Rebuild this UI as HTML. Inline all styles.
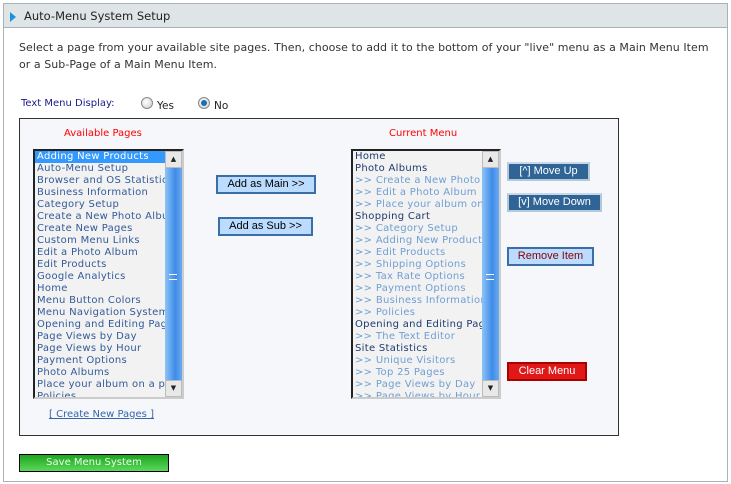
<!DOCTYPE html>
<html><head><meta charset="utf-8"><style>
*{margin:0;padding:0;box-sizing:border-box}
body{width:731px;height:484px;background:#fff;font-family:"DejaVu Sans","Liberation Sans",sans-serif;position:relative;overflow:hidden}
.abs{position:absolute}
.outer{left:3px;top:3px;width:725px;height:479px;border:1px solid #a9b2b7}
.hdr{left:4px;top:4px;width:723px;height:24px;background:#dfe5e6;border-bottom:1px solid #a9b2b7}
.hdr span{position:absolute;left:20px;top:5px;font-size:11.5px;color:#222}
.tri{left:10px;top:12px;width:0;height:0;border-top:5px solid transparent;border-bottom:5px solid transparent;border-left:6px solid #1f8fe0}
.intro{left:19px;top:39px;font-size:11px;color:#333;line-height:17px;width:692px;letter-spacing:0.05px}
.tmd{left:21px;top:98px;font-size:10px;color:#1a1a8c}
.radio{width:12px;height:12px;border-radius:50%;border:1px solid #888;background:radial-gradient(circle at 40% 40%,#fff,#ccc)}
.radio.on::after{content:"";position:absolute;left:2px;top:2px;width:6px;height:6px;border-radius:50%;background:#1a6fb0}
.lbl{font-size:10.5px;color:#222}
.box{left:19px;top:118px;width:600px;height:318px;background:#f6f7fb;border:1px solid #333}
.red{font-size:10px;color:#f00}
.list{width:151px;height:250px;border:2px solid #222;border-right-color:#ccc;border-bottom-color:#ccc;background:#f2f2f2;overflow:hidden}
.list .it{font-size:10px;line-height:12px;height:12px;padding-left:2px;color:#335a99;white-space:nowrap;letter-spacing:0.3px;width:131px;overflow:hidden}
.list .sel{background:#3399ff;color:#fff}
.list .m{color:#1e3a6e}
.list .s{color:#6f9fd4}
.sb{position:absolute;right:0;top:0;width:17px;height:246px;background:linear-gradient(90deg,#8ec4f6,#3f8be8 60%,#6aaaf0)}
.sb .u,.sb .d{position:absolute;left:0;width:17px;height:17px;background:#e8e8e8;border:1px solid #bbb;font-size:7px;text-align:center;line-height:15px;color:#222}
.sb .u{top:0}.sb .d{bottom:0}
.sb .g{position:absolute;left:4px;top:50%;width:8px;height:6px;border-top:1px solid #fff;border-bottom:1px solid #fff}
.btn{position:absolute;font-family:"Liberation Sans",sans-serif;font-size:11px;text-align:center;line-height:14px}
.lb{background:#bcdcff;border:2px solid #3a6ea5;color:#000}
.db{background:#2f6496;border:2px solid #b4c8dc;border-top-color:#c8d8e8;color:#fff}
.rb{background:#e01818;border:2px solid #a00;color:#fff}
.gb{background:linear-gradient(#1da51d,#5cd85c);border:1px solid #000;color:#e8ffe8;font-family:"DejaVu Sans",sans-serif;font-size:10px}
</style></head><body>
<div class="abs outer"></div>
<div class="abs hdr"><span>Auto-Menu System Setup</span></div>
<div class="abs tri"></div>
<div class="abs intro">Select a page from your available site pages. Then, choose to add it to the bottom of your "live" menu as a Main Menu Item or a Sub-Page of a Main Menu Item.</div>
<div class="abs tmd">Text Menu Display:</div>
<div class="abs radio" style="left:141px;top:97px"></div>
<div class="abs lbl" style="left:157px;top:100px">Yes</div>
<div class="abs radio on" style="left:198px;top:97px"></div>
<div class="abs lbl" style="left:214px;top:100px">No</div>
<div class="abs box"></div>
<div class="abs red" style="left:64px;top:128px">Available Pages</div>
<div class="abs red" style="left:389px;top:128px">Current Menu</div>
<div class="abs list" style="left:33px;top:149px">
<div class="it sel">Adding New Products</div><div class="it">Auto-Menu Setup</div><div class="it">Browser and OS Statistics</div><div class="it">Business Information</div><div class="it">Category Setup</div><div class="it">Create a New Photo Album</div><div class="it">Create New Pages</div><div class="it">Custom Menu Links</div><div class="it">Edit a Photo Album</div><div class="it">Edit Products</div><div class="it">Google Analytics</div><div class="it">Home</div><div class="it">Menu Button Colors</div><div class="it">Menu Navigation System</div><div class="it">Opening and Editing Pages</div><div class="it">Page Views by Day</div><div class="it">Page Views by Hour</div><div class="it">Payment Options</div><div class="it">Photo Albums</div><div class="it">Place your album on a page</div><div class="it">Policies</div>
<div class="sb"><div class="u">▲</div><div class="g"></div><div class="d">▼</div></div></div>
<div class="abs list" style="left:351px;top:149px;width:150px">
<div class="it m">Home</div><div class="it m">Photo Albums</div><div class="it s">&gt;&gt; Create a New Photo Album</div><div class="it s">&gt;&gt; Edit a Photo Album</div><div class="it s">&gt;&gt; Place your album on a page</div><div class="it m">Shopping Cart</div><div class="it s">&gt;&gt; Category Setup</div><div class="it s">&gt;&gt; Adding New Products</div><div class="it s">&gt;&gt; Edit Products</div><div class="it s">&gt;&gt; Shipping Options</div><div class="it s">&gt;&gt; Tax Rate Options</div><div class="it s">&gt;&gt; Payment Options</div><div class="it s">&gt;&gt; Business Information</div><div class="it s">&gt;&gt; Policies</div><div class="it m">Opening and Editing Pages</div><div class="it s">&gt;&gt; The Text Editor</div><div class="it m">Site Statistics</div><div class="it s">&gt;&gt; Unique Visitors</div><div class="it s">&gt;&gt; Top 25 Pages</div><div class="it s">&gt;&gt; Page Views by Day</div><div class="it s">&gt;&gt; Page Views by Hour</div>
<div class="sb"><div class="u">▲</div><div class="g"></div><div class="d">▼</div></div></div>
<div class="btn lb" style="left:216px;top:175px;width:100px;height:19px">Add as Main &gt;&gt;</div>
<div class="btn lb" style="left:218px;top:217px;width:95px;height:19px">Add as Sub &gt;&gt;</div>
<div class="btn db" style="left:507px;top:162px;width:83px;height:19px">[^] Move Up</div>
<div class="btn db" style="left:507px;top:193px;width:95px;height:19px">[v] Move Down</div>
<div class="btn lb" style="left:507px;top:247px;width:87px;height:19px;color:#800">Remove Item</div>
<div class="btn rb" style="left:507px;top:362px;width:80px;height:19px">Clear Menu</div>
<div class="abs" style="left:49px;top:409px;font-size:10px;color:#3366aa;text-decoration:underline">[ Create New Pages ]</div>
<div class="btn gb" style="left:19px;top:454px;width:150px;height:18px;line-height:16px">Save Menu System</div>
</body></html>
